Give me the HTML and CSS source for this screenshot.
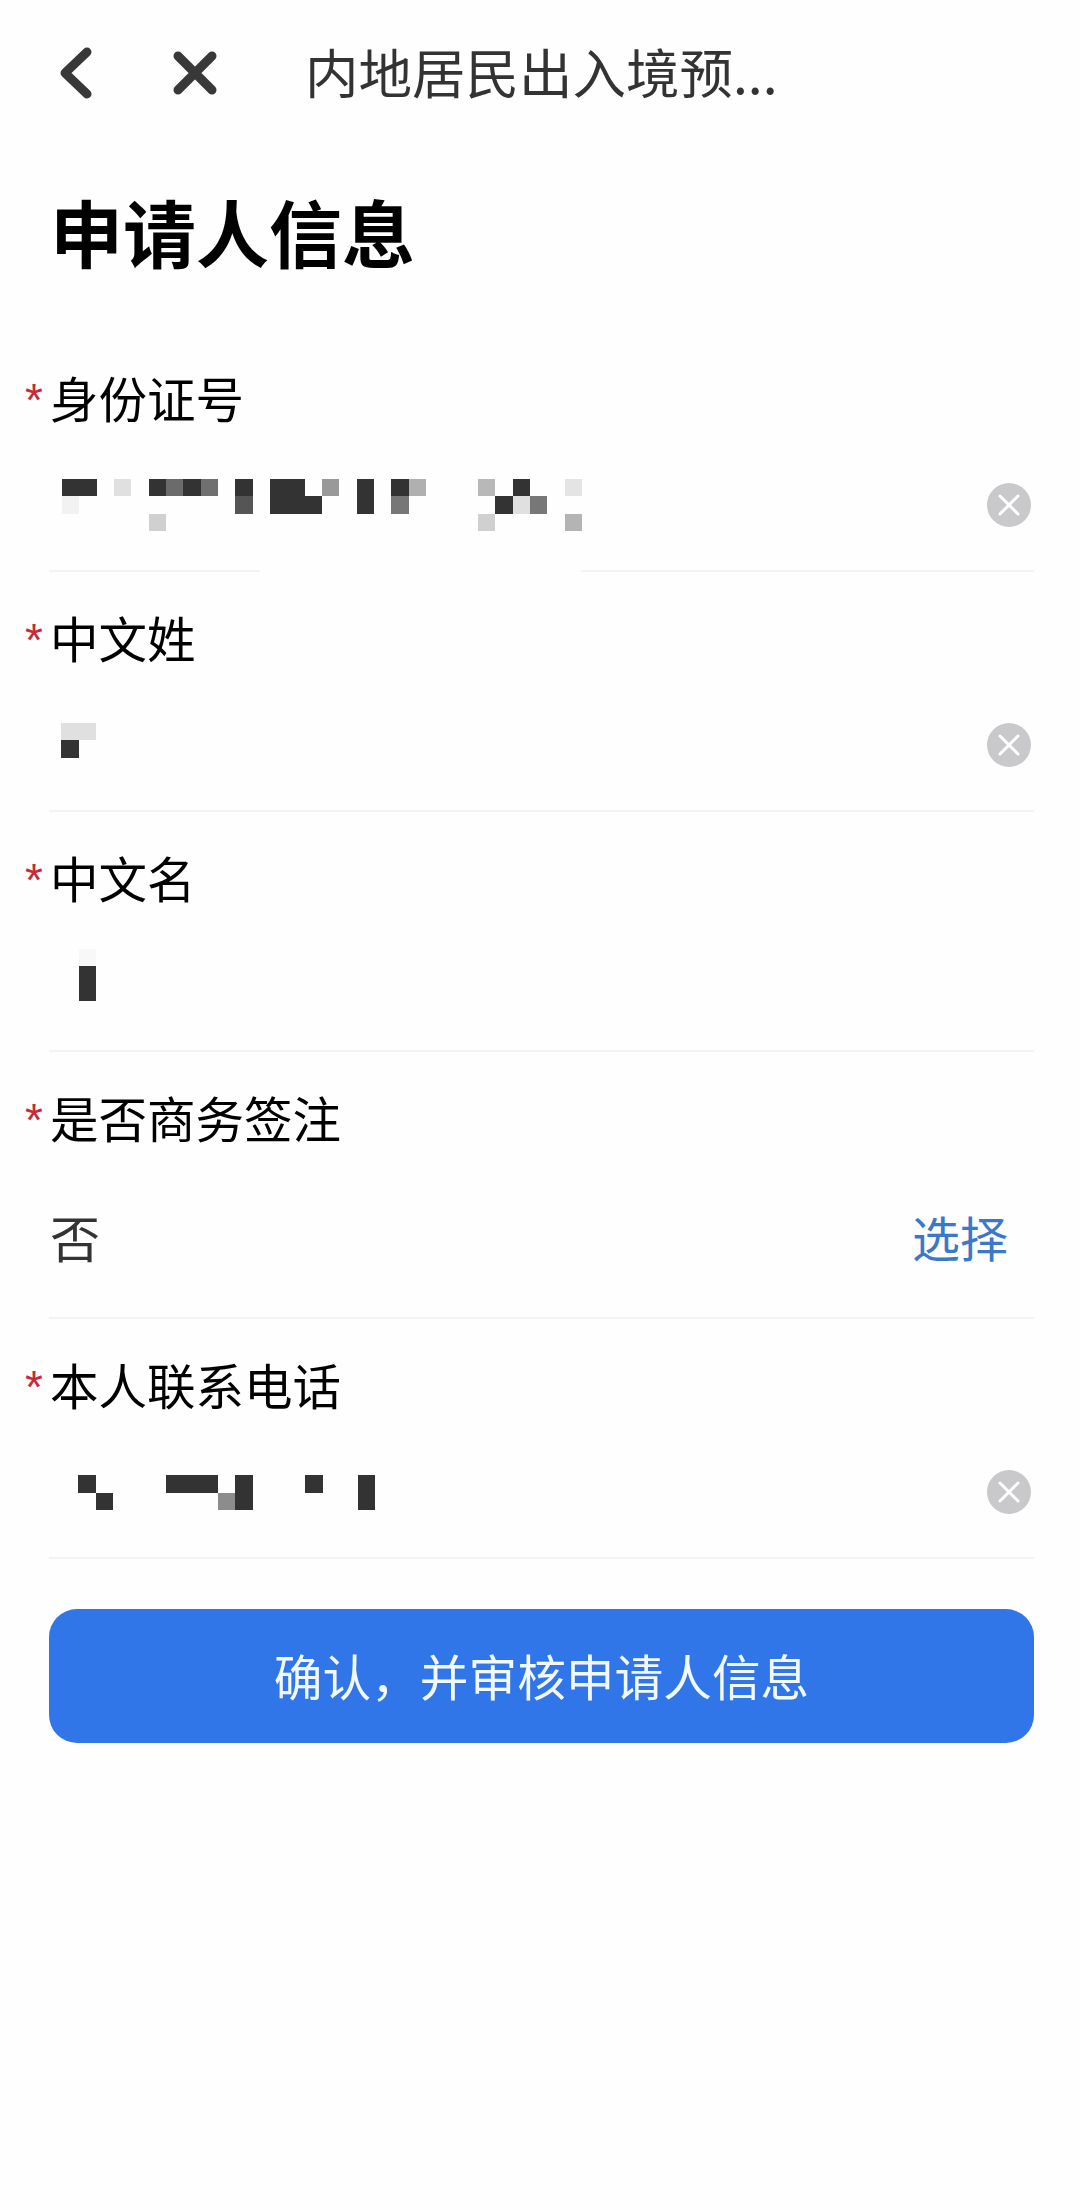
FILE: index.html
```html
<!DOCTYPE html>
<html lang="zh-CN">
<head>
    <meta charset="UTF-8">
    <meta name="viewport" content="width=device-width, initial-scale=1.0">
    <title>申请人信息</title>
    <link rel="stylesheet" href="styles.css">
</head>
<body>
    <!-- Top bar -->
    <header class="topbar">
        <svg class="nav-icon icon-back" viewBox="0 0 36 54" aria-hidden="true">
            <path d="M29 6 L7 27 L29 48"></path>
        </svg>
        <svg class="nav-icon icon-close" viewBox="0 0 48 48" aria-hidden="true">
            <path d="M7 7 L41 41 M41 7 L7 41"></path>
        </svg>
        <span class="page-title">内地居民出入境预...</span>
    </header>

    <h1 class="heading">申请人信息</h1>

    <form class="form">
        <div class="field field-id">
            <label class="field-label"><span class="star">*</span>身份证号</label>
            <div class="field-value">
                <!-- blurred out number -->
                <svg class="mosaic mosaic-id" viewBox="0 0 30 3" shape-rendering="crispEdges" aria-hidden="true">
                    <rect x="0" y="0" width="2" height="1" fill="#333"></rect>
                    <rect x="3" y="0" width="1" height="1" fill="#e0e0e0"></rect>
                    <rect x="5" y="0" width="1" height="1" fill="#333"></rect>
                    <rect x="6" y="0" width="1" height="1" fill="#6b6b6b"></rect>
                    <rect x="7" y="0" width="1" height="1" fill="#333"></rect>
                    <rect x="8" y="0" width="1" height="1" fill="#707070"></rect>
                    <rect x="10" y="0" width="1" height="1" fill="#333"></rect>
                    <rect x="12" y="0" width="2" height="1" fill="#333"></rect>
                    <rect x="15" y="0" width="1" height="1" fill="#999"></rect>
                    <rect x="17" y="0" width="1" height="2" fill="#333"></rect>
                    <rect x="19" y="0" width="1" height="1" fill="#333"></rect>
                    <rect x="20" y="0" width="1" height="1" fill="#b0b0b0"></rect>
                    <rect x="24" y="0" width="1" height="1" fill="#b8b8b8"></rect>
                    <rect x="26" y="0" width="1" height="1" fill="#333"></rect>
                    <rect x="29" y="0" width="1" height="1" fill="#e4e4e4"></rect>
                    <rect x="0" y="1" width="1" height="1" fill="#f2f2f2"></rect>
                    <rect x="10" y="1" width="1" height="1" fill="#555"></rect>
                    <rect x="12" y="1" width="3" height="1" fill="#333"></rect>
                    <rect x="19" y="1" width="1" height="1" fill="#777"></rect>
                    <rect x="25" y="1" width="1" height="1" fill="#333"></rect>
                    <rect x="26" y="1" width="1" height="1" fill="#e0e0e0"></rect>
                    <rect x="27" y="1" width="1" height="1" fill="#777"></rect>
                    <rect x="5" y="2" width="1" height="1" fill="#d0d0d0"></rect>
                    <rect x="24" y="2" width="1" height="1" fill="#d0d0d0"></rect>
                    <rect x="29" y="2" width="1" height="1" fill="#b4b4b4"></rect>
                </svg>
                <svg class="clear-icon" viewBox="0 0 44 44" aria-hidden="true">
                    <circle cx="22" cy="22" r="22"></circle>
                    <path d="M13 13 L31 31 M31 13 L13 31"></path>
                </svg>
            </div>
        </div>

        <div class="field">
            <label class="field-label"><span class="star">*</span>中文姓</label>
            <div class="field-value">
                <svg class="mosaic mosaic-short" viewBox="0 0 2 3" shape-rendering="crispEdges" aria-hidden="true">
                    <rect x="0" y="0" width="2" height="1" fill="#e0e0e0"></rect>
                    <rect x="0" y="1" width="1" height="1" fill="#333"></rect>
                </svg>
                <svg class="clear-icon" viewBox="0 0 44 44" aria-hidden="true">
                    <circle cx="22" cy="22" r="22"></circle>
                    <path d="M13 13 L31 31 M31 13 L13 31"></path>
                </svg>
            </div>
        </div>

        <div class="field">
            <label class="field-label"><span class="star">*</span>中文名</label>
            <div class="field-value">
                <svg class="mosaic mosaic-given" viewBox="0 0 2 3" shape-rendering="crispEdges" aria-hidden="true">
                    <rect x="1" y="0" width="1" height="1" fill="#f8f8f8"></rect>
                    <rect x="1" y="1" width="1" height="2" fill="#333"></rect>
                </svg>
            </div>
        </div>

        <div class="field field-select">
            <label class="field-label"><span class="star">*</span>是否商务签注</label>
            <div class="field-value">
                <span class="value-text">否</span>
                <span class="select-link">选择</span>
            </div>
        </div>

        <div class="field">
            <label class="field-label"><span class="star">*</span>本人联系电话</label>
            <div class="field-value">
                <svg class="mosaic mosaic-phone" viewBox="0 0 18 2" shape-rendering="crispEdges" aria-hidden="true">
                    <rect x="1" y="0" width="1" height="1" fill="#333"></rect>
                    <rect x="2" y="1" width="1" height="1" fill="#333"></rect>
                    <rect x="6" y="0" width="3" height="1" fill="#333"></rect>
                    <rect x="9" y="1" width="1" height="1" fill="#8c8c8c"></rect>
                    <rect x="10" y="0" width="1" height="2" fill="#333"></rect>
                    <rect x="14" y="0" width="1" height="1" fill="#333"></rect>
                    <rect x="17" y="0" width="1" height="2" fill="#333"></rect>
                </svg>
                <svg class="clear-icon" viewBox="0 0 44 44" aria-hidden="true">
                    <circle cx="22" cy="22" r="22"></circle>
                    <path d="M13 13 L31 31 M31 13 L13 31"></path>
                </svg>
            </div>
        </div>

        <button type="button" class="submit-btn">确认，并审核申请人信息</button>
    </form>
</body>
</html>
```

FILE: styles.css
```css
/* General Styling */
body {
    margin: 0;
    padding: 0;
    background-color: #fefefe;
    color: #000;
    font-family: "Noto Sans CJK SC", "Noto Sans", sans-serif;
}

/* Top bar */
.topbar {
    display: flex;
    align-items: center;
    height: 146px;
    padding-left: 58px;
}

.nav-icon {
    flex-shrink: 0;
    fill: none;
    stroke: #383838;
    stroke-linecap: round;
    stroke-linejoin: round;
}

.icon-back {
    width: 36px;
    height: 54px;
    stroke-width: 9;
}

.icon-close {
    width: 48px;
    height: 48px;
    margin-left: 77px;
    stroke-width: 9;
}

.page-title {
    margin-left: 86px;
    padding-bottom: 4px;
    font-size: 53.5px;
    line-height: 70px;
    color: #333;
    white-space: nowrap;
}

/* Heading */
.heading {
    margin: 34px 0 52px 50px;
    font-size: 73px;
    line-height: 100px;
    font-weight: 700;
}

/* Form */
.form {
    padding: 0 46px 0 49px;
}

.field {
    padding-top: 35px;
    border-bottom: 2px solid #f3f3f3;
}

.field-id {
    border-image: linear-gradient(to right, #f3f3f3 212px, #fefefe 212px, #fefefe 532px, #f3f3f3 532px) 1;
}

.field-label {
    display: flex;
    height: 68px;
    margin-left: -24px;
    font-size: 48.5px;
    line-height: 60px;
}

.star {
    width: 25px;
    color: #c8283c;
    font-family: "Liberation Sans", sans-serif;
    font-size: 46px;
    line-height: 66px;
}

.field-value {
    display: flex;
    align-items: center;
    justify-content: space-between;
    height: 130px;
    margin-top: 5px;
    padding-left: 12px;
    padding-right: 3px;
}

.field-select .field-value {
    box-sizing: border-box;
    height: 157px;
    padding-bottom: 6px;
    padding-left: 1px;
    padding-right: 26px;
}

.value-text {
    font-size: 50px;
    color: #333;
}

.select-link {
    font-size: 48px;
    color: #3b78c8;
}

/* Pixelated values */
.mosaic {
    display: block;
    flex-shrink: 0;
}

.mosaic-id {
    width: 522px;
    height: 52px;
}

.mosaic-short {
    width: 35px;
    height: 52px;
    margin-top: 8px;
}

.mosaic-given {
    width: 35px;
    height: 52px;
    margin-bottom: 20px;
}

.mosaic-phone {
    width: 314px;
    height: 35px;
}

.clear-icon {
    flex-shrink: 0;
    width: 44px;
    height: 44px;
}

.clear-icon circle {
    fill: #c9c9cb;
}

.clear-icon path {
    fill: none;
    stroke: #fff;
    stroke-width: 3;
    stroke-linecap: round;
}

/* Submit button */
.submit-btn {
    display: block;
    width: 985px;
    height: 134px;
    margin-top: 50px;
    padding-bottom: 4px;
    border: none;
    border-radius: 28px;
    background: #3176e8;
    color: #f2f8ff;
    font-family: inherit;
    font-size: 48.7px;
}
```
